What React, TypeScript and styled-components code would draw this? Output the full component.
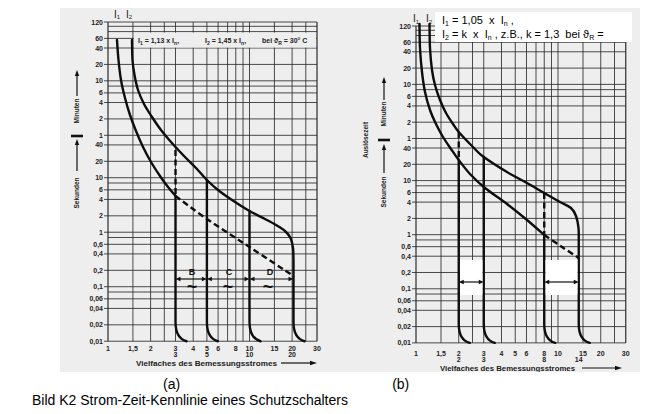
import React from 'react';
import styled, { createGlobalStyle } from 'styled-components';

const GlobalStyle = createGlobalStyle`
  html, body {
    margin: 0;
    padding: 0;
    background: #ffffff;
  }
  body {
    width: 669px;
    height: 414px;
    overflow: hidden;
    font-family: "Liberation Sans", Arial, sans-serif;
  }
`;

const Page = styled.div`
  width: 669px;
  height: 414px;
  display: flex;
  flex-direction: column;
`;

const Scan = styled.div`
  position: relative;
  display: flex;
  width: 580px;
  height: 364px;
  margin: 8px 0 0 60px;
  background: #eeeeee;
`;

const Figure = styled.svg`
  display: block;
  flex: none;
  height: 364px;
`;

const NoteBox = styled.div`
  position: absolute;
  left: 375px;
  top: 4px;
  width: 190px;
  height: 29px;
  padding: 1px 0 0 7px;
  background: #ffffff;
  color: #000;
  font-size: 11px;
  line-height: 14px;
  white-space: pre;
  sub {
    font-size: 7px;
    vertical-align: -2px;
    line-height: 0;
  }
`;

const SubRow = styled.div`
  display: flex;
  gap: 212px;
  margin-top: 4px;
  padding-left: 163px;
  font-size: 14px;
  line-height: 16px;
  color: #000;
`;

const Caption = styled.div`
  padding-left: 32px;
  font-size: 14px;
  line-height: 16px;
  color: #000;
`;

const GridLine = styled.line<{ $edge?: boolean }>`
  stroke: #2c2c2c;
  stroke-width: ${p => (p.$edge ? 1.2 : 0.85)};
`;

const Curve = styled.path<{ $dashed?: boolean }>`
  fill: none;
  stroke: #0e0e0e;
  stroke-width: 2.4;
  stroke-linejoin: round;
  stroke-linecap: ${p => (p.$dashed ? 'butt' : 'round')};
  stroke-dasharray: ${p => (p.$dashed ? '6 3.5' : 'none')};
`;

const Stem = styled.line`
  stroke: #111;
  stroke-width: 1.2;
`;

const Head = styled.polygon`
  fill: #111;
`;

const Blank = styled.rect<{ $white?: boolean }>`
  fill: ${p => (p.$white ? '#ffffff' : '#eeeeee')};
`;

const Num = styled.text`
  font-family: "Liberation Sans", Arial, sans-serif;
  font-weight: 700;
  font-size: 7px;
  fill: #222;
`;

const SideText = styled.text`
  font-family: "Liberation Sans", Arial, sans-serif;
  font-weight: 600;
  font-size: 6.5px;
  fill: #222;
`;

const CurveName = styled.text`
  font-family: "Liberation Sans", Arial, sans-serif;
  font-size: 10px;
  fill: #1a1a1a;
`;

const Zone = styled.text<{ $tilde?: boolean }>`
  font-family: "Liberation Sans", Arial, sans-serif;
  font-weight: 700;
  font-size: ${p => (p.$tilde ? 18 : 9)}px;
  fill: #111;
`;

type Pt = [number, number];
type Scale = { X: (v: number) => number; Y: (t: number) => number };

const LOG_TOP = Math.log10(7200);
const makeScale = (x0: number, kx: number, top: number, ky: number): Scale => ({
  X: v => x0 + Math.log10(v) * kx,
  Y: t => top + (LOG_TOP - Math.log10(t)) * ky,
});

const H_MIN = [120, 100, 80, 60, 40, 20, 10, 8, 6, 4, 2, 1];
const H_SEC = [40, 20, 10, 8, 6, 4, 2, 1, 0.8, 0.6, 0.4, 0.2, 0.1, 0.08, 0.06, 0.04, 0.02, 0.01];
const L_MIN = [120, 60, 40, 20, 10, 6, 4, 2, 1];
const L_SEC = [40, 20, 10, 6, 4, 2, 1, 0.6, 0.4, 0.2, 0.1, 0.06, 0.04, 0.02, 0.01];
const V_LINES = [1, 1.5, 2, 2.5, 3, 4, 5, 6, 7, 8, 9, 10, 15, 20, 25, 30];
const X_LABELS = [1, 1.5, 2, 3, 4, 5, 6, 8, 10, 15, 20, 30];

const fmt = (v: number) => String(v).replace('.', ',');

// catmull-rom through the traced points
const smooth = (pts: Pt[]) => {
  let d = `M${pts[0][0]},${pts[0][1]}`;
  for (let i = 0; i < pts.length - 1; i++) {
    const p0 = pts[i - 1] || pts[i];
    const p1 = pts[i];
    const p2 = pts[i + 1];
    const p3 = pts[i + 2] || p2;
    const c1x = p1[0] + (p2[0] - p0[0]) / 6;
    const c1y = p1[1] + (p2[1] - p0[1]) / 6;
    const c2x = p2[0] - (p3[0] - p1[0]) / 6;
    const c2y = p2[1] - (p3[1] - p1[1]) / 6;
    d += ` C${c1x},${c1y} ${c2x},${c2y} ${p2[0]},${p2[1]}`;
  }
  return d;
};

const foot = (x: number, bottom: number) =>
  ` L${x},${bottom - 19} C${x},${bottom - 8} ${x + 4},${bottom - 2} ${x + 11},${bottom}`;

const DoubleArrow = ({ x1, x2, y }: { x1: number; x2: number; y: number }) => (
  <g>
    <Stem x1={x1 + 3} x2={x2 - 3} y1={y} y2={y} />
    <Head points={`${x1},${y} ${x1 + 5},${y - 2.2} ${x1 + 5},${y + 2.2}`} />
    <Head points={`${x2},${y} ${x2 - 5},${y - 2.2} ${x2 - 5},${y + 2.2}`} />
  </g>
);

const UpArrow = ({ x, from, to }: { x: number; from: number; to: number }) => (
  <g>
    <Stem x1={x} x2={x} y1={from} y2={to + 4} />
    <Head points={`${x},${to} ${x - 2.2},${to + 6} ${x + 2.2},${to + 6}`} />
  </g>
);

type AxesProps = {
  s: Scale;
  rowY: number;
  second: number[];
  titleX: number;
  titleLen: number;
  arrow: [number, number];
  side: { x: number; min: number; bar: number; sec: number; up1: [number, number]; up2: [number, number] };
};

const Axes = ({ s, rowY, second, titleX, titleLen, arrow, side }: AxesProps) => {
  const { X, Y } = s;
  const left = X(1);
  const right = X(30);
  const top = Y(7200);
  const bottom = Y(0.01);
  const labels = [...L_MIN.map(m => ({ t: m * 60, v: m })), ...L_SEC.map(v => ({ t: v, v }))];
  return (
    <g>
      {[...H_MIN.map(m => m * 60), ...H_SEC].map(t => (
        <GridLine key={`h${t}`} x1={left} x2={right} y1={Y(t)} y2={Y(t)} />
      ))}
      {V_LINES.map(v => (
        <GridLine key={`v${v}`} x1={X(v)} x2={X(v)} y1={top} y2={bottom} $edge={v === 1 || v === 30} />
      ))}
      {labels.map(({ t, v }, i) => (
        <g key={`l${i}`}>
          <GridLine x1={left - 4} x2={left} y1={Y(t)} y2={Y(t)} />
          <Num x={left - 5} y={Y(t) + 2.5} textAnchor="end">
            {fmt(v)}
          </Num>
        </g>
      ))}
      {X_LABELS.map(v => (
        <Num key={`x${v}`} x={X(v)} y={rowY} textAnchor="middle">
          {fmt(v)}
        </Num>
      ))}
      {second.map(v => (
        <Num key={`s${v}`} x={X(v)} y={rowY + 6.5} textAnchor="middle">
          {v}
        </Num>
      ))}
      <Num x={titleX} y={rowY + 15} textLength={titleLen} lengthAdjust="spacingAndGlyphs" fontWeight={600}>
        Vielfaches des Bemessungsstromes
      </Num>
      <Stem x1={arrow[0]} x2={arrow[1] - 4} y1={rowY + 12.5} y2={rowY + 12.5} />
      <Head points={`${arrow[1]},${rowY + 12.5} ${arrow[1] - 7},${rowY + 10.3} ${arrow[1] - 7},${rowY + 14.7}`} />

      <UpArrow x={side.x} from={side.up1[0]} to={side.up1[1]} />
      <SideText transform={`translate(${side.x + 2.3},${side.min}) rotate(-90)`} textAnchor="middle">
        Minuten
      </SideText>
      <rect x={side.x - 6} y={side.bar - 1.3} width={12} height={2.6} fill="#111" />
      <UpArrow x={side.x} from={side.up2[0]} to={side.up2[1]} />
      <SideText transform={`translate(${side.x + 2.3},${side.sec}) rotate(-90)`} textAnchor="middle">
        Sekunden
      </SideText>
    </g>
  );
};

const Names = ({ x1, x2, y }: { x1: number; x2: number; y: number }) => (
  <g>
    <CurveName x={x1} y={y} textAnchor="middle">
      I<tspan dy={1.5} fontSize={6}>1</tspan>
    </CurveName>
    <CurveName x={x2} y={y} textAnchor="middle">
      I<tspan dy={1.5} fontSize={6}>2</tspan>
    </CurveName>
  </g>
);

// chart (a)
const A = makeScale(108, 141.5, 22, 54.5);
const A_BOTTOM = A.Y(0.01);
const a3 = A.X(3);
const a5 = A.X(5);
const a10 = A.X(10);
const aD = 293.5;

const A_I1: Pt[] = [
  [117, 40], [118.5, 60], [121, 80], [125, 98], [130, 115], [136, 131],
  [143, 147], [151, 162], [160, 176], [168, 187], [a3, 196],
];
const A_I2: Pt[] = [
  [132, 40], [132.5, 60], [134.5, 75], [138, 90], [144, 104], [152, 117], [161, 130],
  [171, 142], [184, 156], [196, 168], [a5, 180], [218, 190], [232, 200], [a10, 211],
  [265, 219], [276, 225], [285, 231], [290.5, 238], [293, 248], [aD, 260],
];
const A_DASH: Pt[] = [[a3, 196], [a5, 219], [a10, 247], [aD, 276]];

const ChartA = () => (
  <Figure width={300} viewBox="60 8 300 364">
    <Axes
      s={A}
      rowY={350.5}
      second={[3, 5, 10, 20]}
      titleX={136}
      titleLen={141}
      arrow={[281, 317]}
      side={{ x: 77, min: 111, bar: 136, sec: 193, up1: [96, 70], up2: [171, 139] }}
    />
    <Blank x={134} y={32.6} width={182} height={15} />
    <Num x={138} y={43}>
      I<tspan dy={1.5} fontSize={5}>1</tspan>
      <tspan dy={-1.5}> = 1,13 x I</tspan>
      <tspan dy={1.5} fontSize={5}>n</tspan>
      <tspan dy={-1.5}>,</tspan>
    </Num>
    <Num x={205} y={43}>
      I<tspan dy={1.5} fontSize={5}>2</tspan>
      <tspan dy={-1.5}> = 1,45 x I</tspan>
      <tspan dy={1.5} fontSize={5}>n</tspan>
      <tspan dy={-1.5}>,</tspan>
    </Num>
    <Num x={262} y={43}>
      bei ϑ<tspan dy={1.5} fontSize={5}>R</tspan>
      <tspan dy={-1.5}> = 30° C</tspan>
    </Num>
    <Names x1={117} x2={129} y={17.5} />

    <Curve d={smooth(A_I1)} />
    <Curve d={smooth(A_I2) + foot(aD, A_BOTTOM)} />
    <Curve d={`M${a3},150 L${a3},196`} $dashed />
    <Curve d={`M${a3},196` + foot(a3, A_BOTTOM)} />
    <Curve d={`M${a5},180` + foot(a5, A_BOTTOM)} />
    <Curve d={`M${a10},211` + foot(a10, A_BOTTOM)} />
    <Curve d={smooth(A_DASH)} $dashed />

    <DoubleArrow x1={a3} x2={a5} y={279} />
    <DoubleArrow x1={a5} x2={a10} y={279} />
    <DoubleArrow x1={a10} x2={aD} y={279} />
    <Zone x={192} y={274.5} textAnchor="middle">B</Zone>
    <Zone x={229} y={274.5} textAnchor="middle">C</Zone>
    <Zone x={270} y={274.5} textAnchor="middle">D</Zone>
    <Zone x={192} y={293} textAnchor="middle" $tilde>~</Zone>
    <Zone x={228} y={293} textAnchor="middle" $tilde>~</Zone>
    <Zone x={268} y={293} textAnchor="middle" $tilde>~</Zone>
  </Figure>
);

// chart (b)
const B = makeScale(416, 142, 26, 54.1);
const B_BOTTOM = B.Y(0.01);
const b2 = B.X(2);
const b3 = B.X(3);
const b8 = B.X(8);
const b14 = B.X(14);

const B_I1: Pt[] = [
  [419.5, 24], [420, 48], [422, 72], [425, 92], [430, 110], [436, 124], [443, 137],
  [451, 149], [b2, 160], [470, 174], [485, 188], [507, 204], [527, 220], [b8, 235],
];
const B_DASH: Pt[] = [[b8, 235], [562, 247], [b14, 258]];
const B_I2: Pt[] = [
  [429.5, 24], [430, 48], [432, 70], [435, 85], [440, 100], [446, 113], [453, 124],
  [b2, 132], [473, 147], [b3, 157], [507, 172], [527, 183], [b8, 193], [560, 202],
  [571, 208], [576, 216], [578.5, 228], [b14, 240],
];

const ChartB = () => (
  <Figure width={280} viewBox="360 8 280 364">
    <Axes
      s={B}
      rowY={355.5}
      second={[2, 3, 8, 14]}
      titleX={440}
      titleLen={135}
      arrow={[582, 622]}
      side={{ x: 384, min: 114, bar: 140, sec: 192, up1: [100, 77], up2: [173, 144] }}
    />
    <SideText transform="translate(368,140) rotate(-90)" textAnchor="middle">
      Auslösezeit
    </SideText>
    <Names x1={416} x2={429} y={22} />

    <Curve d={smooth(B_I1)} />
    <Curve d={smooth(B_DASH)} $dashed />
    <Curve d={smooth(B_I2) + foot(b14, B_BOTTOM)} />
    <Curve d={`M${b2},132 L${b2},160`} $dashed />
    <Curve d={`M${b2},160` + foot(b2, B_BOTTOM)} />
    <Curve d={`M${b3},157` + foot(b3, B_BOTTOM)} />
    <Curve d={`M${b8},193 L${b8},235`} $dashed />
    <Curve d={`M${b8},235` + foot(b8, B_BOTTOM)} />

    <Blank x={b2 + 1.3} y={260} width={b3 - b2 - 2.6} height={35} $white />
    <Blank x={b8 + 1.3} y={260} width={b14 - b8 - 2.6} height={35} $white />
    <DoubleArrow x1={b2} x2={b3} y={282} />
    <DoubleArrow x1={b8} x2={b14} y={282} />
  </Figure>
);

const App: React.FC = () => (
  <Page>
    <GlobalStyle />
    <Scan>
      <ChartA />
      <ChartB />
      <NoteBox>
        {'I'}<sub>1</sub>{' = 1,05  x  I'}<sub>n</sub>{' ,\n'}
        {'I'}<sub>2</sub>{' = k  x  I'}<sub>n</sub>{' , z.B., k = 1,3  bei ϑ'}<sub>R</sub>{' ='}
      </NoteBox>
    </Scan>
    <SubRow>
      <span>(a)</span>
      <span>(b)</span>
    </SubRow>
    <Caption>Bild K2 Strom-Zeit-Kennlinie eines Schutzschalters</Caption>
  </Page>
);

export default App;
